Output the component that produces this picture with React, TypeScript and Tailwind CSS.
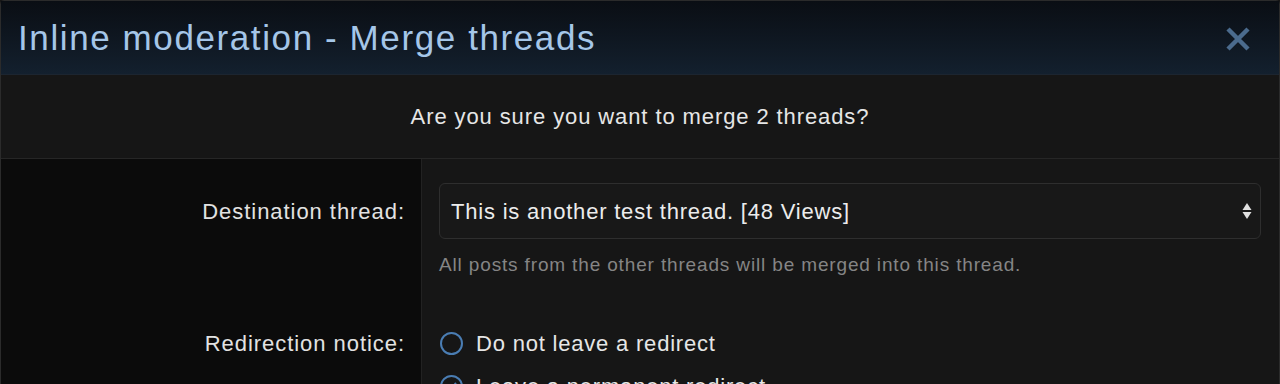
import React from "react";

export default function App() {
  return (
    <div
      className="w-[1280px] h-[384px] overflow-hidden bg-[#161616]"
      style={{ fontFamily: '"Liberation Sans", Arial, sans-serif' }}
    >
      <div className="border border-[#2b2b2b] rounded-t-[4px] h-[440px] flex flex-col">
        <div className="h-[74px] shrink-0 flex items-center justify-between pl-[17px] pr-[28px] bg-gradient-to-b from-[#0a0e14] to-[#13202e] border-b border-[#1c2530]">
          <h1 className="text-[35px] leading-none text-[#a5c6e8] tracking-[1.6px]">
            Inline moderation - Merge threads
          </h1>
          <svg width="26" height="26" viewBox="0 0 26 26" className="mt-[2px]">
            <path d="M3 3 L23 23 M23 3 L3 23" stroke="#4b6b8d" strokeWidth="4.5" strokeLinecap="butt" />
          </svg>
        </div>
        <div className="h-[84px] shrink-0 flex items-center justify-center text-[22px] tracking-[0.9px] text-[#e6e6e6] bg-[#161616] border-b border-[#262626]">
          Are you sure you want to merge 2 threads?
        </div>
        <div className="flex flex-col flex-1">
          <div className="flex">
            <div className="w-[421px] shrink-0 bg-[#0b0b0b] border-r border-[#222222] flex justify-end pr-[16px] pt-[24px]">
              <div className="h-[56px] flex items-center text-[22px] tracking-[0.95px] text-[#e2e2e2]">
                Destination thread:
              </div>
            </div>
            <div className="flex-1 bg-[#161616] pl-[17px] pr-[18px] pt-[24px] pb-[54px]">
              <div className="h-[56px] rounded-[6px] border border-[#2e2e2e] bg-[#181818] flex items-center justify-between pl-[11px] pr-[8px]">
                <span className="text-[22px] tracking-[0.8px] text-[#ececec]">This is another test thread. [48 Views]</span>
                <svg width="10" height="18" viewBox="0 0 10 18">
                  <path d="M5 1 L9.5 8 L0.5 8 Z" fill="#e0e0e0" />
                  <path d="M5 17 L9.5 10 L0.5 10 Z" fill="#e0e0e0" />
                </svg>
              </div>
              <div className="mt-[14px] text-[19px] tracking-[0.85px] text-[#858585] leading-[24px]">
                All posts from the other threads will be merged into this thread.
              </div>
            </div>
          </div>
          <div className="flex flex-1">
            <div className="w-[421px] shrink-0 bg-[#0b0b0b] border-r border-[#222222] flex justify-end pr-[16px]">
              <div className="h-[24px] flex items-center text-[22px] tracking-[0.95px] text-[#e2e2e2]">
                Redirection notice:
              </div>
            </div>
            <div className="flex-1 bg-[#161616] pl-[17px] pr-[18px]">
              <div className="flex flex-col gap-[19px]">
                <label className="flex items-center h-[24px] gap-[13px]">
                  <span className="w-[23px] h-[23px] rounded-full border-2 border-[#4a7db3] ml-[1px]" />
                  <span className="text-[22px] tracking-[0.8px] text-[#e6e6e6]">Do not leave a redirect</span>
                </label>
                <label className="flex items-center h-[24px] gap-[13px]">
                  <span className="w-[23px] h-[23px] rounded-full border-2 border-[#4a7db3] ml-[1px] flex items-center justify-center">
                    <svg width="13" height="13" viewBox="0 0 13 13">
                      <path d="M2 7 L5 10 L11 3" stroke="#4a7db3" strokeWidth="2" fill="none" />
                    </svg>
                  </span>
                  <span className="text-[22px] tracking-[0.8px] text-[#e6e6e6]">Leave a permanent redirect</span>
                </label>
              </div>
            </div>
          </div>
        </div>
      </div>
    </div>
  );
}
